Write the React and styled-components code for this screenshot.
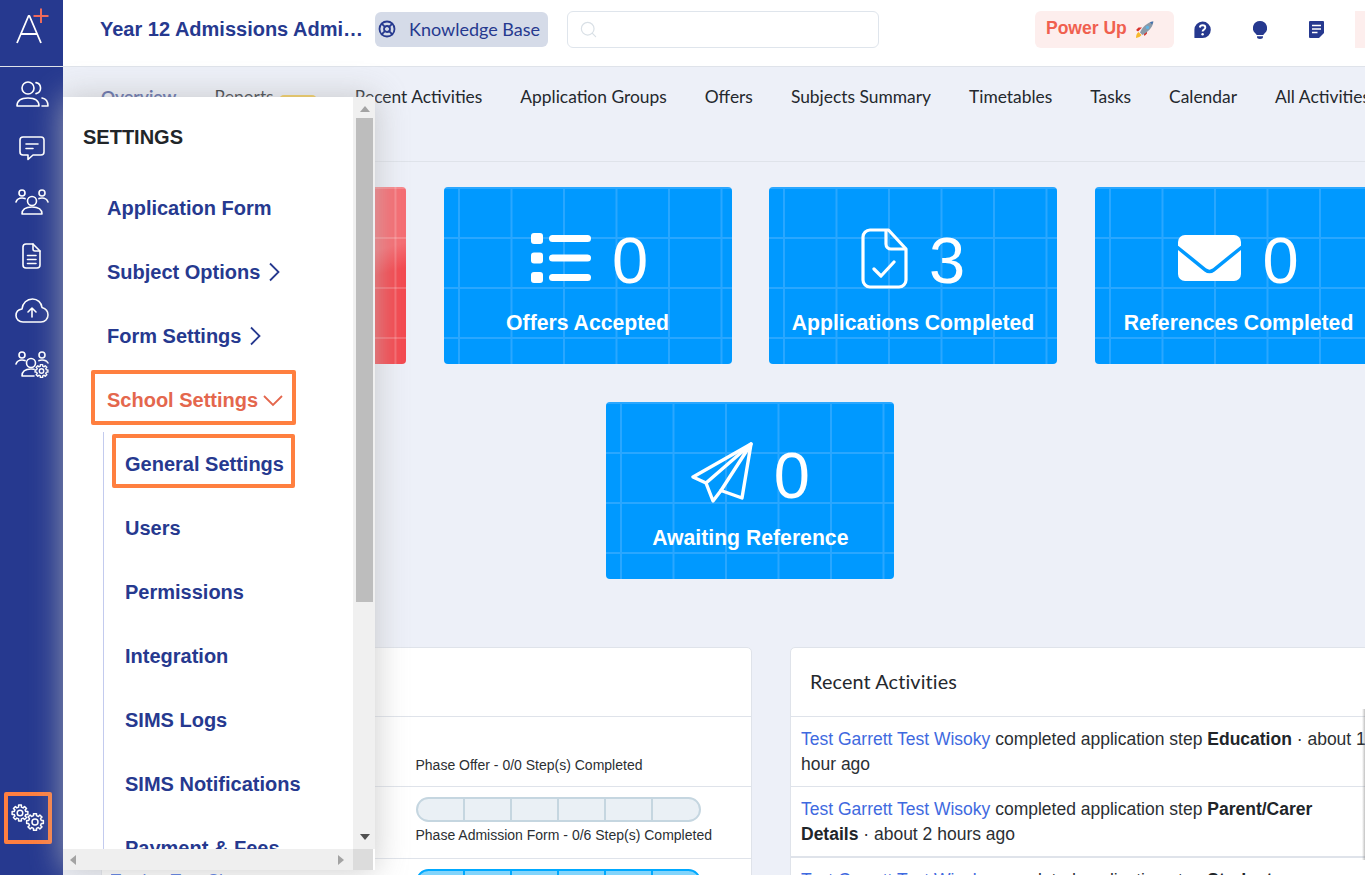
import React from 'react';
import styled, { createGlobalStyle, css } from 'styled-components';
import { LifeBuoy, Search } from 'lucide-react';

const Global = createGlobalStyle`
  html, body { margin: 0; padding: 0; height: 875px; overflow: hidden; background: #edf0f8; }
  body { font-family: "Liberation Sans", Arial, sans-serif; color: #212529; }
  * { box-sizing: border-box; }
`;

const navy = '#26398f';
const sans = '"Lato", "Liberation Sans", sans-serif';

const Page = styled.div`
  position: relative;
  display: flex;
  width: 1463px;
  height: 875px;
  overflow: hidden;
`;
const Sidebar = styled.aside`
  flex: 0 0 63px;
  height: 875px;
  background: ${navy};
  display: flex;
  flex-direction: column;
  align-items: center;
`;
const Logo = styled.div`
  width: 100%;
  height: 67px;
  border-bottom: 1px solid #dfe3ea;
  display: flex;
  align-items: flex-start;
  justify-content: center;
  padding: 8px 0 0 2px;
`;
const SideNav = styled.nav`
  display: flex;
  flex-direction: column;
  align-items: center;
  padding-top: 14px;
`;
const SideItem = styled.div`
  height: 54px;
  width: 63px;
  display: flex;
  align-items: center;
  justify-content: center;
  padding-bottom: 28px;
`;
const GearSlot = styled.div`
  margin-top: auto;
  margin-bottom: 31px;
  width: 48px;
  height: 52px;
  display: flex;
  align-items: center;
  justify-content: center;
  border: 4px solid #ff7f3f;
  border-radius: 2px;
  position: relative;
  left: -4px;
`;
const Main = styled.main`
  flex: 0 0 1400px;
  display: flex;
  flex-direction: column;
`;
const TopBar = styled.header`
  height: 67px;
  flex: none;
  background: #fff;
  border-bottom: 1px solid #dfe3ea;
  display: flex;
  align-items: flex-start;
  padding: 11px 0 0 37px;
`;
const Title = styled.h1`
  margin: 6px 0 0;
  width: 266px;
  font-size: 20px;
  line-height: 24px;
  font-weight: 700;
  color: ${navy};
  white-space: nowrap;
  overflow: hidden;
  text-overflow: ellipsis;
`;
const KbButton = styled.div`
  margin: 1px 0 0 9px;
  width: 173px;
  height: 35px;
  background: #d5dbe8;
  border-radius: 6px;
  display: flex;
  align-items: center;
  gap: 13px;
  padding: 0 0 1px 3px;
  color: ${navy};
  font: 400 18px/1 ${sans};
  white-space: nowrap;
`;
const SearchBox = styled.div`
  margin-left: 19px;
  width: 312px;
  height: 37px;
  background: #fff;
  border: 1px solid #dfe5ec;
  border-radius: 6px;
  display: flex;
  align-items: center;
  padding-left: 11px;
  color: #d9e0e6;
`;
const PowerUp = styled.div`
  margin-left: 156px;
  width: 139px;
  height: 37px;
  background: #fdeeed;
  border-radius: 6px;
  display: flex;
  align-items: center;
  gap: 8px;
  padding: 0 0 3px 11px;
  color: #f0604f;
  font-size: 17.5px;
  font-weight: 700;
  white-space: nowrap;
`;
const IconGroup = styled.div`
  margin: 10px 0 0 20px;
  display: flex;
  align-items: flex-start;
  gap: 42px;
`;
const PinkStub = styled.div`
  margin-left: 31px;
  width: 30px;
  height: 37px;
  background: #fdeeed;
`;
const Tabs = styled.nav`
  height: 95px;
  flex: none;
  border-bottom: 1px solid #dfe3ea;
  display: flex;
  gap: 38px;
  align-items: flex-start;
  padding: 18px 0 0 38px;
`;
const Tab = styled.span`
  font: 400 17.4px/24px ${sans};
  color: ${p => (p.$active ? '#4a5a9e' : '#24282d')};
  font-weight: ${p => (p.$active ? 700 : 400)};
  white-space: nowrap;
  display: flex;
`;
const Badge = styled.i`
  display: block;
  width: 38px;
  height: 16px;
  margin: 10px 0 0 5px;
  background: #f5c842;
  border-radius: 5px;
`;
const CardGrid = styled.section`
  width: 1300px;
  margin: 25px 0 0 37.3px;
  display: flex;
  flex-wrap: wrap;
  justify-content: center;
  gap: 38px 37.5px;
`;
const redTone = css`
  background-color: #f4525a;
  background-image:
    linear-gradient(to right, rgba(255,255,255,.18) 2px, transparent 2px),
    linear-gradient(to bottom, rgba(255,255,255,.18) 2px, transparent 2px),
    linear-gradient(165deg, #f66c72 0 52%, #f4484f 62% 100%);
  background-size: 52.5px 100%, 100% 50px, 100% 100%;
  background-position: 14px 0, 0 0, 0 0;
`;
const blueTone = css`
  background-color: #0099ff;
  background-image:
    linear-gradient(to right, #2aa7ff 2px, transparent 2px),
    linear-gradient(to bottom, #2aa7ff 2px, transparent 2px);
  background-size: 52.5px 100%, 100% 50px;
  background-position: 14px 0, 0 0;
`;
const Card = styled.article`
  width: 288px;
  height: 177px;
  border-radius: 4px;
  padding-top: 40px;
  color: #fff;
  display: flex;
  flex-direction: column;
  align-items: center;
  ${p => (p.$tone === 'red' ? redTone : blueTone)}
`;
const CardTop = styled.div`
  height: 62px;
  display: flex;
  align-items: center;
  gap: 21px;
`;
const CardNumber = styled.span`
  font-size: 65px;
  line-height: 62px;
  padding-top: 5px;
`;
const CardLabel = styled.div`
  margin-top: 21px;
  font-size: 21.2px;
  line-height: 26px;
  font-weight: 700;
  white-space: nowrap;
`;
const Panels = styled.section`
  margin: 68px 0 0 37.5px;
  display: flex;
  align-items: flex-start;
  gap: 38px;
`;
const Panel = styled.div`
  flex: none;
  width: ${p => p.$w}px;
  background: #fff;
  border: 1px solid #dfe3ea;
  border-radius: 5px 5px 0 0;
`;
const PanelHead = styled.div`
  height: 68px;
  padding-left: 19px;
  display: flex;
  align-items: center;
  font: 400 19.8px/1 ${sans};
  letter-spacing: .15px;
  color: #24282d;
`;
const ProgressRow = styled.div`
  height: ${p => p.$h}px;
  border-top: 1px solid #dfe3ea;
  padding: 10px 0 0 9px;
  display: flex;
`;
const RowName = styled.a`
  flex: 0 0 305px;
  font-size: 17.5px;
  line-height: 25px;
  color: #3f6ae0;
  white-space: nowrap;
  overflow: hidden;
`;
const RowSteps = styled.div`
  flex: 1;
  display: flex;
  flex-direction: column;
`;
const Bar = styled.div`
  --line: ${p => (p.$done ? '#00a9ff' : '#c5d6e0')};
  width: 285px;
  height: 25px;
  flex: none;
  display: flex;
  overflow: hidden;
  border-radius: 13px;
  border: 2px solid var(--line);
  background: ${p => (p.$done ? '#82d4fb' : '#eaf0f5')};
`;
const BarStep = styled.span`
  flex: 1;
  border-left: 2px solid var(--line);
  &:first-child { border-left: 0; }
`;
const BarGap = styled.div`
  height: 25px;
  flex: none;
`;
const StepText = styled.div`
  margin-top: 3px;
  font-size: 14px;
  line-height: 21px;
  color: #2b2f33;
`;
const ActivityRow = styled.div`
  height: 70px;
  border-top: ${p => p.$tb}px solid #dfe3ea;
  padding: 10px 10px 0 10px;
  font-size: 17.5px;
  line-height: 25px;
  color: #2b2f33;
`;
const Who = styled.a`
  color: #3f6ae0;
`;
const Step = styled.b`
  color: #212529;
`;
const EdgeShade = styled.div`
  position: absolute;
  left: 1362px;
  top: 709px;
  width: 3px;
  height: 151px;
  background: linear-gradient(to right, rgba(150,150,150,0), rgba(120,120,120,.45));
`;

/* Flyout menu, lying over the page */
const Flyout = styled.div`
  position: absolute;
  left: 63px;
  top: 97px;
  width: 312px;
  height: 773px;
  background: #fff;
  box-shadow: 0 0 30px rgba(185,185,185,.75);
  display: grid;
  grid-template-columns: 290px 22px;
  grid-template-rows: 752px 21px;
`;
const MenuViewport = styled.div`
  overflow: hidden;
  position: relative;
`;
const MenuTitle = styled.h2`
  margin: 0;
  height: 79px;
  padding: 28px 0 0 20px;
  font-size: 20px;
  line-height: 24px;
  font-weight: 700;
  color: #212529;
`;
const MenuItem = styled.div`
  height: 64px;
  padding-left: ${p => (p.$sub ? 21 : 44)}px;
  display: flex;
  align-items: center;
  gap: ${p => (p.$open ? 5 : 8)}px;
  font-size: 20px;
  font-weight: 700;
  white-space: nowrap;
  color: ${p => (p.$open ? '#e4674d' : navy)};
`;
const SubMenu = styled.div`
  margin-left: 40px;
  border-left: 1px solid #c3cbee;
`;
const Callout = styled.div`
  position: absolute;
  border: 4px solid #ff7f3f;
  border-radius: 2px;
  left: ${p => p.$x}px;
  top: ${p => p.$y}px;
  width: ${p => p.$w}px;
  height: ${p => p.$h}px;
`;
const VBar = styled.div`
  background: #f0f0f0;
  border-left: 3px solid #f0f0f0;
  border-right: 2px solid #f0f0f0;
  display: flex;
  flex-direction: column;
  align-items: center;
`;
const Arrow = styled.i`
  display: block;
  width: 0;
  height: 0;
  border-style: solid;
  border-color: transparent;
  ${p => p.$dir === 'up' && css`border-width: 0 5px 6px; border-bottom-color: #a3a3a3;`}
  ${p => p.$dir === 'down' && css`border-width: 6px 5px 0; border-top-color: #505050;`}
  ${p => p.$dir === 'left' && css`border-width: 5px 6px 5px 0; border-right-color: #a3a3a3;`}
  ${p => p.$dir === 'right' && css`border-width: 5px 0 5px 6px; border-left-color: #a3a3a3;`}
`;
const VThumb = styled.div`
  width: 17px;
  height: 484px;
  margin-top: 7px;
  background: #bdbdbd;
`;
const UpSlot = styled.div`
  height: 14px;
  padding-top: 9px;
  display: flex;
`;
const DownSlot = styled.div`
  margin-top: auto;
  padding-bottom: 9px;
`;
const HBar = styled.div`
  background: #efefef;
  display: flex;
  align-items: center;
  justify-content: space-between;
  padding: 0 9px 0 7px;
`;
const Corner = styled.div`
  background: #dcdcdc;
  border-right: 2px solid #fff;
`;

/* ---- icons ---- */
const Svg = ({ w, h, sw = 1.6, children, color = '#fff' }) => (
  <svg width={w} height={h} viewBox={`0 0 ${w} ${h}`} fill="none" stroke={color} strokeWidth={sw} strokeLinecap="round" strokeLinejoin="round" style={{ flex: 'none', display: 'block' }}>
    {children}
  </svg>
);
const gear = (cx, cy, ro, ri, n = 8) => {
  const pts = [];
  for (let i = 0; i < n; i++) {
    const a = (i / n) * Math.PI * 2;
    const s = Math.PI / n;
    const at = (r, t) => `${(cx + r * Math.cos(t)).toFixed(2)} ${(cy + r * Math.sin(t)).toFixed(2)}`;
    pts.push(at(ro, a - s * 0.45), at(ro, a + s * 0.45), at(ri, a + s * 0.6), at(ri, a + s * 1.4));
  }
  return `M${pts.join('L')}Z`;
};
const APlus = () => (
  <svg width="36" height="38" viewBox="0 0 36 38" fill="none" style={{ display: 'block' }}>
    <path d="M2 35 L13.500 8 h1 L26 35 M6 26 H22" stroke="#fff" strokeWidth="1.800" strokeLinejoin="round" />
    <path d="M26 .5 V15 M18.500 8 H33.500" stroke="#ee6a5c" strokeWidth="2" />
  </svg>
);
const UsersIcon = () => (
  <Svg w={34} h={26}>
    <circle cx="13" cy="7" r="6" />
    <path d="M21 1.600a5.600 5.600 0 0 1 0 11" />
    <path d="M2 25c0-5 4-8 11-8s11 3 11 8z" />
    <path d="M27 17c4 .8 6 4 6 8h-6" />
  </Svg>
);
const ChatIcon = () => (
  <Svg w={26} h={25}>
    <path d="M4 1H22a3 3 0 0 1 3 3V16a3 3 0 0 1-3 3H14L9 23.500V19H4a3 3 0 0 1-3-3V4a3 3 0 0 1 3-3z" />
    <path d="M7 8H19M7 12.500H14" />
  </Svg>
);
const GroupIcon = () => (
  <Svg w={34} h={26}>
    <circle cx="7" cy="4" r="3" />
    <circle cx="27" cy="4" r="3" />
    <circle cx="17" cy="12" r="4.500" />
    <path d="M1 13c1-3 3-4 6-4 1 0 2 .2 3 .6M33 13c-1-3-3-4-6-4-1 0-2 .2-3 .6" />
    <path d="M7 25c0-5 4-7 10-7s10 2 10 7z" />
  </Svg>
);
const DocIcon = () => (
  <Svg w={19} h={26}>
    <path d="M4 1H11L18 8V22a3 3 0 0 1-3 3H4a3 3 0 0 1-3-3V4a3 3 0 0 1 3-3z" />
    <path d="M11 1V6a2 2 0 0 0 2 2H18M5.500 12.500H14M5.500 16.500H14M5.500 20.500H14" />
  </Svg>
);
const CloudIcon = () => (
  <Svg w={34} h={25}>
    <path d="M8 24C4 24 1 21 1 17.500 1 14 3.500 11.500 7 11 7.500 5 12 1 17.500 1 22.500 1 26.500 4.500 27 9.500 30.500 10.500 33 13.500 33 17 33 21 30 24 26 24z" />
    <path d="M17 19V10M13 14l4-4 4 4" />
  </Svg>
);
const GroupGearIcon = () => (
  <Svg w={34} h={27}>
    <circle cx="7" cy="4" r="3" />
    <circle cx="27" cy="4" r="3" />
    <circle cx="16" cy="12" r="4.500" />
    <path d="M1 13c1-3 3-4 6-4 1 0 2 .2 3 .6M33 12c-1-2-3-3-6-3-1 0-2 .2-3 .6" />
    <path d="M7 25c0-5 4-7 9-7 1 0 2 .1 3 .3M7 25H19" />
    <path d={gear(26.5, 20, 6.5, 5)} strokeWidth="1.400" />
    <circle cx="26.500" cy="20" r="2.200" strokeWidth="1.400" />
  </Svg>
);
const GearsIcon = () => (
  <Svg w={34} h={28} sw={1.5}>
    <path d={gear(9, 9, 8, 6)} />
    <circle cx="9" cy="9" r="2.800" />
    <path d={gear(24, 18, 8.5, 6.5)} />
    <circle cx="24" cy="18" r="3" />
  </Svg>
);
const HelpIcon = () => (
  <svg width="17" height="18" viewBox="0 0 17 18" style={{ display: 'block' }}>
    <path d="M8.500 .5a8.300 8.300 0 0 1 0 16.600H1a.6.6 0 0 1-.6-.6V8.800A8.200 8.200 0 0 1 8.500 .5z" fill={navy} />
    <path d="M5.800 6.500c.2-1.500 1.300-2.300 2.800-2.300 1.600 0 2.700 1 2.700 2.300 0 2.200-2.700 2-2.700 4" fill="none" stroke="#fff" strokeWidth="1.900" />
    <circle cx="8.600" cy="13.300" r="1.200" fill="#fff" />
  </svg>
);
const BulbIcon = () => (
  <svg width="14" height="18" viewBox="0 0 14 18" style={{ display: 'block' }}>
    <path d="M7 0a7 7 0 0 1 4.500 12.400c-.6.5-1 1-1.100 1.600H3.600c-.1-.6-.5-1.100-1.100-1.600A7 7 0 0 1 7 0z" fill={navy} />
    <path d="M4 15.200H10V16c0 1-1 2-3 2s-3-1-3-2z" fill={navy} />
  </svg>
);
const NoteIcon = () => (
  <svg width="15" height="17" viewBox="0 0 15 17" style={{ display: 'block' }}>
    <path d="M1 0H14a1 1 0 0 1 1 1V12L10 17H1a1 1 0 0 1-1-1V1a1 1 0 0 1 1-1z" fill={navy} />
    <path d="M3 4.500H12M3 8H12M3 11.500H8.500" stroke="#fff" strokeWidth="1.700" />
  </svg>
);
const RocketIcon = () => (
  <svg width="19" height="18" viewBox="0 0 19 18" style={{ display: 'block', marginTop: 4 }}>
    <path d="M1 17c0-3 1-5 2.500-6l3 3c-1 1.500-3 2.500-5.500 3z" fill="#f7b92c" />
    <path d="M3 10.500L7 6.500H3.500L1 9zM8.500 12L12 9v3.500L9.500 15z" fill="#d8322c" />
    <path d="M5 11.500C7.500 6 12 1.500 18.500.5 17.500 7 13 11 7.500 14z" fill="#8b9aa8" />
    <path d="M14.500 1.200c1 .3 2 1.200 2.500 2.500 .6-1 1-2 1.200-3.100-1.300.1-2.600.3-3.700.6z" fill="#3f6fae" />
    <circle cx="12.500" cy="6.500" r="1.700" fill="#5fb4e6" />
  </svg>
);
const ChevronRight = () => (
  <svg width="12" height="20" viewBox="0 0 12 20" fill="none" stroke={navy} strokeWidth="1.800" style={{ display: 'block' }}>
    <path d="M2 1.500L10.500 10L2 18.500" />
  </svg>
);
const ChevronDown = () => (
  <svg width="20" height="12" viewBox="0 0 20 12" fill="none" stroke="#e4674d" strokeWidth="1.800" style={{ display: 'block', marginTop: 2 }}>
    <path d="M1 1L10 10L19 1" />
  </svg>
);
const ListIcon = () => (
  <svg width="60" height="50" viewBox="0 0 60 50" fill="#fff" style={{ display: 'block', marginLeft: 4 }}>
    <rect x="0" y="0" width="12" height="11" rx="3" />
    <rect x="0" y="19.500" width="12" height="11" rx="3" />
    <rect x="0" y="39" width="12" height="11" rx="3" />
    <rect x="18" y="2" width="42" height="7" rx="3.500" />
    <rect x="18" y="21.500" width="42" height="7" rx="3.500" />
    <rect x="18" y="41" width="42" height="7" rx="3.500" />
  </svg>
);
const DocCheckIcon = () => (
  <Svg w={47} h={61} sw={3.2}>
    <path d="M9 2H27.500L45 21V52a7 7 0 0 1-7 7H9a7 7 0 0 1-7-7V9a7 7 0 0 1 7-7z" />
    <path d="M25 2.500V16a5 5 0 0 0 5 5H44.500M13 41L20 48L33 34" />
  </Svg>
);
const MailIcon = () => (
  <svg width="63" height="46" viewBox="0 0 63 46" style={{ display: 'block' }}>
    <rect width="63" height="46" rx="7" fill="#fff" />
    <path d="M-1 12L27.500 35Q31.500 38 35.500 35L64 12" fill="none" stroke="#0099ff" strokeWidth="3.500" />
  </svg>
);
const PlaneIcon = () => (
  <Svg w={62} h={62} sw={3.4}>
    <path d="M60 2L2 35L15 41L22 59L30 48.500L51 56Z" />
    <path d="M60 2L15 41M60 2L30 48.500" />
  </Svg>
);

const cards = [
  { Icon: ListIcon, n: 0, label: 'Offers Accepted' },
  { Icon: DocCheckIcon, n: 3, label: 'Applications Completed' },
  { Icon: MailIcon, n: 0, label: 'References Completed' },
  { Icon: PlaneIcon, n: 0, label: 'Awaiting Reference' },
];
const tabs = ['Application Groups', 'Offers', 'Subjects Summary', 'Timetables', 'Tasks', 'Calendar', 'All Activities'];
const subItems = ['General Settings', 'Users', 'Permissions', 'Integration', 'SIMS Logs', 'SIMS Notifications', 'Payment & Fees'];
const sideIcons = [UsersIcon, ChatIcon, GroupIcon, DocIcon, CloudIcon, GroupGearIcon];

const Steps = ({ done }) => (
  <Bar $done={done}>
    {[0, 1, 2, 3, 4, 5].map(i => <BarStep key={i} />)}
  </Bar>
);

export default function App() {
  return (
    <Page>
      <Global />
      <Sidebar>
        <Logo><APlus /></Logo>
        <SideNav>
          {sideIcons.map((I, i) => <SideItem key={i}><I /></SideItem>)}
        </SideNav>
        <GearSlot><GearsIcon /></GearSlot>
      </Sidebar>
      <Main>
        <TopBar>
          <Title>Year 12 Admissions Administration</Title>
          <KbButton><LifeBuoy size={18} strokeWidth={2.4} />Knowledge Base</KbButton>
          <SearchBox><Search size={19} strokeWidth={1.5} /></SearchBox>
          <PowerUp>Power Up <RocketIcon /></PowerUp>
          <IconGroup><HelpIcon /><BulbIcon /><NoteIcon /></IconGroup>
          <PinkStub />
        </TopBar>
        <Tabs>
          <Tab $active>Overview</Tab>
          <Tab>Reports<Badge /></Tab>
          <Tab>Recent Activities</Tab>
          {tabs.map(t => <Tab key={t}>{t}</Tab>)}
        </Tabs>
        <CardGrid>
          <Card $tone="red" />
          {cards.map(({ Icon, n, label }) => (
            <Card key={label}>
              <CardTop><Icon /><CardNumber>{n}</CardNumber></CardTop>
              <CardLabel>{label}</CardLabel>
            </Card>
          ))}
        </CardGrid>
        <Panels>
          <Panel $w={651.5}>
            <PanelHead />
            <ProgressRow $h={70}>
              <RowName />
              <RowSteps>
                <BarGap />
                <StepText>Phase Offer - 0/0 Step(s) Completed</StepText>
              </RowSteps>
            </ProgressRow>
            <ProgressRow $h={72}>
              <RowName>Test Garrett Test Wisoky</RowName>
              <RowSteps>
                <Steps />
                <StepText>Phase Admission Form - 0/6 Step(s) Completed</StepText>
              </RowSteps>
            </ProgressRow>
            <ProgressRow $h={72}>
              <RowName>Testing Test Sl</RowName>
              <RowSteps><Steps done /></RowSteps>
            </ProgressRow>
          </Panel>
          <Panel $w={590}>
            <PanelHead>Recent Activities</PanelHead>
            <ActivityRow $tb={1}>
              <Who>Test Garrett Test Wisoky</Who> completed application step <Step>Education</Step> · about 1 hour ago
            </ActivityRow>
            <ActivityRow $tb={1}>
              <Who>Test Garrett Test Wisoky</Who> completed application step <Step>Parent/Carer Details</Step> · about 2 hours ago
            </ActivityRow>
            <ActivityRow $tb={2}>
              <Who>Test Garrett Test Wisoky</Who> completed application step <Step>Student Background</Step>
            </ActivityRow>
          </Panel>
        </Panels>
      </Main>
      <EdgeShade />
      <Flyout>
        <MenuViewport>
          <MenuTitle>SETTINGS</MenuTitle>
          <MenuItem>Application Form</MenuItem>
          <MenuItem>Subject Options <ChevronRight /></MenuItem>
          <MenuItem>Form Settings <ChevronRight /></MenuItem>
          <MenuItem $open>School Settings <ChevronDown /></MenuItem>
          <SubMenu>
            {subItems.map(s => <MenuItem key={s} $sub>{s}</MenuItem>)}
          </SubMenu>
          <Callout $x={28} $y={273} $w={205} $h={55} />
          <Callout $x={49} $y={337} $w={183} $h={54} />
        </MenuViewport>
        <VBar>
          <UpSlot><Arrow $dir="up" /></UpSlot>
          <VThumb />
          <DownSlot><Arrow $dir="down" /></DownSlot>
        </VBar>
        <HBar><Arrow $dir="left" /><Arrow $dir="right" /></HBar>
        <Corner />
      </Flyout>
    </Page>
  );
}
